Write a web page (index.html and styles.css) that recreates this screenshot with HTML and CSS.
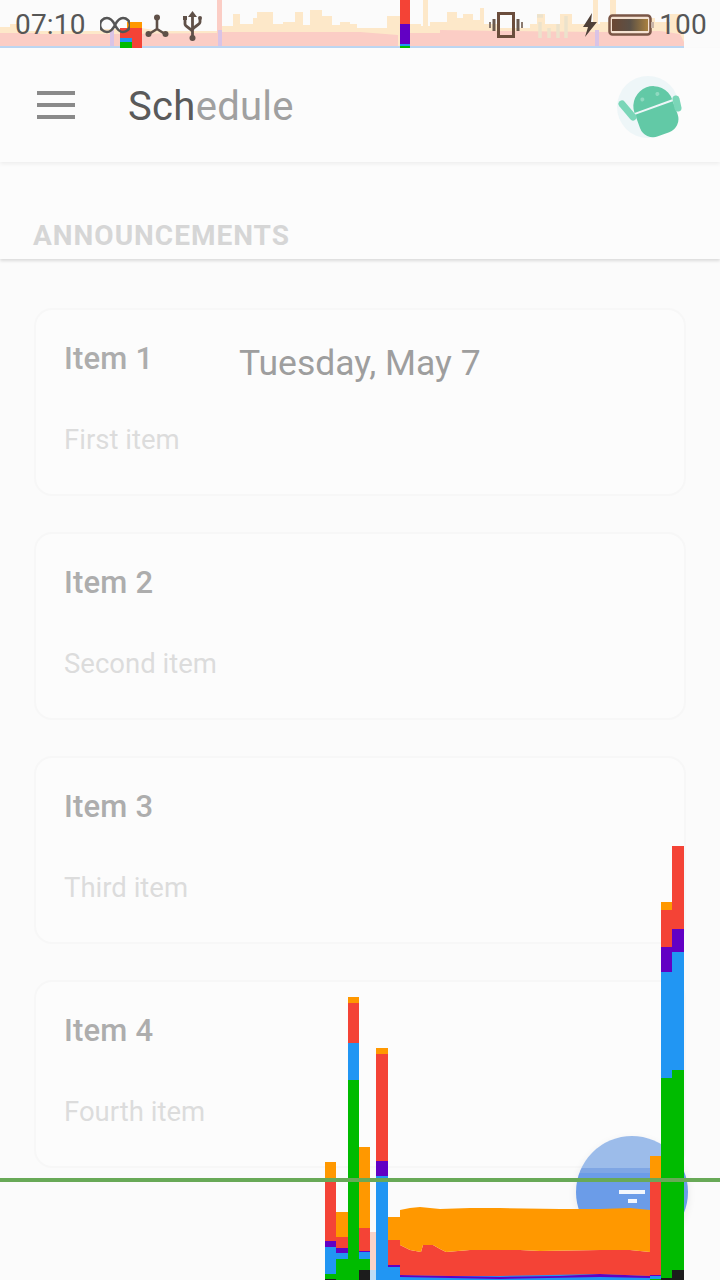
FILE: index.html
```html
<!DOCTYPE html>
<html lang="en">
<head>
<meta charset="utf-8">
<title>Schedule</title>
<link rel="stylesheet" href="styles.css">
</head>
<body>
<div class="screen">
  <svg class="strip" width="720" height="50" viewBox="0 0 720 50">
    <polygon class="s-orange" points="0,48 0,27 10,27 10,24 20,24 20,31 100,31 100,29 135,29 135,27 160,31 218,31 222,31 222,26 233,26 233,14 240,14 240,24 253,24 253,18 257,18 257,12 273,12 273,24 283,24 283,22 295,22 295,12 303,12 303,25 310,25 310,10 322,10 322,16 332,16 332,25 340,25 340,22 350,22 350,24 357,24 357,28 387,28 387,16 400,16 400,48"/>
    <polygon class="s-orange" points="410,48 410,24 421,24 421,26 430,26 430,22 447,22 447,12 457,12 457,18 463,18 463,14 473,14 473,20 480,20 480,8 484,8 484,24 500,24 500,28 530,28 530,24 537,24 537,14 545,14 545,24 560,24 560,14 572,14 572,24 600,24 600,22 640,22 640,18 655,18 655,22 670,22 670,14 680,14 680,30 684,30 684,48"/>
    <rect class="s-orange" x="423" y="0" width="5" height="48"/>
    <rect class="s-orange" x="593" y="0" width="5" height="48"/>
    <rect class="s-orange" x="610" y="0" width="6" height="48"/>
    <rect class="s-orange" x="219" y="0" width="3" height="48"/>
    <polygon class="s-pink" points="0,46 0,33 40,33 40,34 110,34 218,33 218,32 300,32 340,32 360,32 398,35 398,46"/>
    <polygon class="s-pink" points="410,46 410,33 440,33 440,30 500,31 600,32 660,31 680,34 684,42 684,46"/>
    <rect class="s-pink" x="217" y="0" width="5" height="46"/>
    <rect class="s-lilac" x="218" y="30" width="4" height="16"/>
    <rect class="s-lilac" x="110" y="30" width="4" height="16"/>
    <rect class="s-lilac" x="595" y="30" width="4" height="16"/>
    <rect class="s-blue" x="0" y="46" width="684" height="3"/>
    <rect class="o" x="127" y="22" width="15" height="6"/>
    <rect class="r" x="120" y="28" width="22" height="21"/>
    <rect class="b" x="120" y="38" width="12" height="4"/>
    <rect class="g" x="120" y="42" width="12" height="7"/>
    <rect class="r" x="400" y="0" width="10" height="24"/>
    <rect class="p" x="400" y="24" width="10" height="20"/>
    <rect class="b" x="400" y="44" width="10" height="2"/>
    <rect class="g" x="400" y="46" width="10" height="3"/>
  </svg>

  <header class="status">
    <div class="status-left">
      <span class="status-text">07:10</span>
      <svg class="ic-loop" width="30" height="18" viewBox="0 0 30 18"><path d="M15 9C12 3 9 2 7 2a7 7 0 0 0 0 14c2 0 5-1 8-7s6-7 8-7a7 7 0 0 1 0 14c-2 0-5-1-8-7" fill="none" stroke="#555" stroke-width="2.600"/></svg>
      <svg class="ic-hub" width="24" height="24" viewBox="0 0 24 24"><path d="M12 4v11M12 15L4 20M12 15l8 5" stroke="#5f5048" stroke-width="2.600" fill="none"/><circle cx="12" cy="3.500" r="3" fill="#5f5048"/><circle cx="3.500" cy="20" r="3" fill="#5f5048"/><circle cx="20.500" cy="20" r="3" fill="#5f5048"/></svg>
      <svg class="ic-usb" width="19" height="30" viewBox="0 0 19 30"><path d="M9.500 5v23M2 8v5c0 3 7.500 5 7.500 8M17 8v3c0 3-7.500 5-7.500 8" stroke="#5f5048" stroke-width="2.800" fill="none"/><path d="M9.500 0l4.500 6H5z" fill="#5f5048"/><rect x="0" y="5" width="4" height="4" fill="#5f5048"/><circle cx="17" cy="7" r="2" fill="#5f5048"/><circle cx="9.500" cy="27" r="3" fill="#5f5048"/></svg>
    </div>
    <div class="status-right">
      <svg class="ic-vibrate" width="34" height="26" viewBox="0 0 34 26"><rect x="9.500" y="1.500" width="15" height="23" fill="none" stroke="#6b4d3c" stroke-width="3"/><path d="M5 7v12M29 7v12" stroke="#6b5a50" stroke-width="3"/><path d="M1 10v6M33 10v6" stroke="#8b7a70" stroke-width="2"/></svg>
      <svg class="ic-signal" width="36" height="30" viewBox="0 0 36 30"><path d="M4 6h6M7 12v16M16 18v10M25 14v14M33 6v22" stroke="#ece2cc" stroke-width="3.500" fill="none"/></svg>
      <svg class="ic-bolt" width="14" height="24" viewBox="0 0 14 24"><path d="M9 0L0 14h5l-3 10L14 9H8z" fill="#4f4038"/></svg>
      <svg class="ic-battery" width="46" height="22" viewBox="0 0 46 22"><defs><linearGradient id="batt" x1="0" x2="1" y1="0" y2="0"><stop offset="0" stop-color="#6b4733"/><stop offset="0.5" stop-color="#5b5046"/><stop offset="1" stop-color="#a8803f"/></linearGradient></defs><rect x="1.500" y="1.500" width="41" height="19" rx="3" fill="#f5e2d2" stroke="#7a5646" stroke-width="2.500"/><rect x="4" y="5" width="36" height="12" fill="url(#batt)"/><rect x="43" y="8" width="3" height="6" fill="#c9b5a8"/></svg>
      <span class="status-text">100</span>
    </div>
  </header>

  <div class="appbar">
    <div class="menu"><span class="menu-line"></span><span class="menu-line"></span><span class="menu-line"></span></div>
    <h1 class="title"><span class="title-dark">Sch</span><span class="title-light">edule</span></h1>
    <svg class="avatar" width="70" height="70" viewBox="0 0 70 70">
      <circle cx="33" cy="39" r="31" fill="#eef6f8"/>
      <g transform="rotate(-20 39 40)" fill="#62c9a6">
        <path d="M19 38a20 20 0 0 1 40 0z"/>
        <path d="M19 40h40v14a14 14 0 0 1-14 14H33a14 14 0 0 1-14-14z"/>
        <circle cx="31" cy="28" r="2" fill="#8fd9c0"/>
        <circle cx="47" cy="28" r="2" fill="#8fd9c0"/>
      </g>
      <line x1="61" y1="31" x2="63" y2="40" stroke="#7ad6b8" stroke-width="7" stroke-linecap="round"/>
      <line x1="7" y1="36" x2="18" y2="49" stroke="#7ad6b8" stroke-width="7" stroke-linecap="round"/>
    </svg>
  </div>

  <div class="section-head"><h2 class="section-title">ANNOUNCEMENTS</h2></div>

  <main class="list">
    <article class="card"><h3 class="card-title">Item 1</h3><p class="card-sub">First item</p></article>
    <article class="card"><h3 class="card-title">Item 2</h3><p class="card-sub">Second item</p></article>
    <article class="card"><h3 class="card-title">Item 3</h3><p class="card-sub">Third item</p></article>
    <article class="card"><h3 class="card-title">Item 4</h3><p class="card-sub">Fourth item</p></article>
  </main>

  <div class="date">Tuesday, May 7</div>

  <button class="fab" type="button" aria-label="Filter"><span class="fab-line fab-line-long"></span><span class="fab-line fab-line-short"></span></button>

  <svg class="bars" width="720" height="1280" viewBox="0 0 720 1280">
    <rect class="o" x="325" y="1162" width="11" height="19"/><rect class="r" x="325" y="1181" width="11" height="60"/><rect class="p" x="325" y="1241" width="11" height="6"/><rect class="b" x="325" y="1247" width="11" height="27"/><rect class="g" x="325" y="1274" width="11" height="5"/><rect class="k" x="325" y="1279" width="11" height="1"/>
    <rect class="o" x="336" y="1212" width="12" height="25"/><rect class="r" x="336" y="1237" width="12" height="11"/><rect class="p" x="336" y="1248" width="12" height="5"/><rect class="b" x="336" y="1253" width="12" height="6"/><rect class="g" x="336" y="1259" width="12" height="21"/>
    <rect class="o" x="348" y="997" width="11" height="6"/><rect class="r" x="348" y="1003" width="11" height="40"/><rect class="b" x="348" y="1043" width="11" height="37"/><rect class="g" x="348" y="1080" width="11" height="200"/>
    <rect class="o" x="359" y="1147" width="11" height="81"/><rect class="r" x="359" y="1228" width="11" height="23"/><rect class="p" x="359" y="1251" width="11" height="1"/><rect class="b" x="359" y="1252" width="11" height="7"/><rect class="g" x="359" y="1259" width="11" height="11"/><rect class="k" x="359" y="1270" width="11" height="10"/>
    <rect class="pale" x="370" y="1232" width="6" height="38"/><rect class="pale-b" x="370" y="1270" width="6" height="10"/>
    <rect class="o" x="376" y="1048" width="12" height="6"/><rect class="r" x="376" y="1054" width="12" height="107"/><rect class="p" x="376" y="1161" width="12" height="15"/><rect class="b" x="376" y="1176" width="12" height="104"/>
    <rect class="o" x="388" y="1217" width="12" height="23"/><rect class="r" x="388" y="1240" width="12" height="25"/><rect class="p" x="388" y="1265" width="12" height="2"/><rect class="b" x="388" y="1267" width="12" height="13"/>
    <rect class="b" x="400" y="1274" width="250" height="6"/>
    <polygon class="p" points="400,1275 450,1276 500,1277 560,1276 600,1274 650,1276 650,1278 600,1277 500,1279 400,1277"/>
    <polygon class="r" points="400,1245 410,1250 421,1252 423,1245 433,1245 440,1249 446,1252 470,1250 520,1250 540,1251 600,1250 630,1250 650,1252 650,1276 600,1274 500,1276 450,1276 400,1275"/>
    <polygon class="o" points="400,1210 410,1208 420,1207 440,1209 470,1208 500,1208 560,1209 600,1209 630,1208 650,1210 650,1252 630,1250 600,1250 540,1251 520,1250 470,1250 446,1252 440,1249 433,1245 423,1245 421,1252 410,1250 400,1245"/>
    <rect class="o" x="650" y="1156" width="11" height="25"/><rect class="r" x="650" y="1181" width="11" height="94"/><rect class="p" x="650" y="1275" width="11" height="1"/><rect class="b" x="650" y="1276" width="11" height="3"/><rect class="g" x="650" y="1279" width="11" height="1"/>
    <rect class="o" x="661" y="902" width="11" height="8"/><rect class="r" x="661" y="910" width="11" height="37"/><rect class="p" x="661" y="947" width="11" height="25"/><rect class="b" x="661" y="972" width="11" height="106"/><rect class="g" x="661" y="1078" width="11" height="200"/><rect class="k" x="661" y="1278" width="11" height="2"/>
    <rect class="r" x="672" y="846" width="12" height="83"/><rect class="p" x="672" y="929" width="12" height="23"/><rect class="b" x="672" y="952" width="12" height="118"/><rect class="g" x="672" y="1070" width="12" height="200"/><rect class="k" x="672" y="1270" width="12" height="10"/>
  </svg>

  <div class="baseline"></div>
</div>
</body>
</html>
```

FILE: styles.css
```css
html, body {
  margin: 0;
  padding: 0;
}

body {
  background: #fbfbfb;
  font-family: Roboto, "Liberation Sans", sans-serif;
}

.screen {
  position: relative;
  width: 720px;
  height: 1280px;
  overflow: hidden;
  background: #fbfbfb;
}

.strip {
  position: absolute;
  left: 0;
  top: 0;
}

.s-orange { fill: #fde8c9; }
.s-pink { fill: #fbcdc5; }
.s-lilac { fill: #d9c3e6; }
.s-blue { fill: #bcd6f2; }

.o { fill: #ff9800; }
.r { fill: #f44336; }
.p { fill: #6200c4; }
.b { fill: #2196f3; }
.g { fill: #00bb00; }
.k { fill: #1c1c1c; }
.pale { fill: #f9d3c8; }
.pale-b { fill: #bcdcf5; }

.status {
  position: relative;
  display: flex;
  justify-content: space-between;
  align-items: center;
  height: 48px;
  padding: 2px 13px 0 15px;
  box-sizing: border-box;
}

.status-left,
.status-right {
  display: flex;
  align-items: center;
}

.status-text {
  font-size: 28px;
  line-height: 46px;
  color: #565656;
  letter-spacing: 0.2px;
}

.ic-loop { margin-left: 14px; }
.ic-hub { margin-left: 15px; margin-top: 2px; }
.ic-usb { margin-left: 14px; margin-top: 2px; }
.ic-vibrate { margin-right: 0; }
.ic-signal { margin-left: 10px; }
.ic-bolt { margin-left: 14px; }
.ic-battery { margin-left: 11px; margin-right: 5px; }

.appbar {
  display: flex;
  align-items: center;
  height: 114px;
  padding: 0 36px 0 37px;
  box-sizing: border-box;
  background: #fcfcfc;
  box-shadow: 0 2px 4px rgba(0, 0, 0, 0.06);
  position: relative;
  z-index: 1;
}

.menu {
  display: flex;
  flex-direction: column;
  gap: 8px;
  width: 38px;
}

.menu-line {
  display: block;
  height: 4px;
  background: #8a8a8a;
}

.title {
  flex: 1;
  margin: 4px 0 0 53px;
  font-size: 40px;
  font-weight: 400;
  line-height: 48px;
  letter-spacing: 0.3px;
}

.title-dark { color: #5a5a5a; }
.title-light { color: #a0a0a0; }

.avatar {
  margin-right: -1px;
  margin-bottom: 4px;
}

.section-head {
  height: 97px;
  box-sizing: border-box;
  padding: 58px 0 0 33px;
  background: #fcfcfc;
  box-shadow: 0 2px 3px rgba(0, 0, 0, 0.13);
  position: relative;
}

.section-title {
  margin: 0;
  font-size: 28px;
  font-weight: 700;
  line-height: 32px;
  letter-spacing: 1px;
  color: #d6d6d6;
}

.list {
  display: flex;
  flex-direction: column;
  gap: 36px;
  padding: 49px 34px 0;
}

.card {
  height: 188px;
  box-sizing: border-box;
  padding: 31px 28px 0;
  background: #fcfcfc;
  border: 2px solid #f7f7f7;
  border-radius: 18px;
  flex: none;
}

.card-title {
  margin: 0;
  font-size: 31px;
  font-weight: 500;
  line-height: 36px;
  letter-spacing: 0.2px;
  color: #adadad;
}

.card-sub {
  margin: 46px 0 0;
  font-size: 27.500px;
  font-weight: 400;
  line-height: 34px;
  color: #dcdcdc;
}

.date {
  position: absolute;
  left: 239px;
  top: 341px;
  font-size: 35.500px;
  line-height: 44px;
  color: #9e9e9e;
}

.fab {
  position: absolute;
  left: 576px;
  top: 1136px;
  width: 112px;
  height: 112px;
  border: 0;
  padding: 52px 0 0 0;
  border-radius: 50%;
  background: linear-gradient(#9cbcea 0, #9cbcea 29%, #7fa6e4 29%, #7fa6e4 33%, #6b9ce8 33%);
  box-shadow: 0 3px 8px rgba(0, 0, 0, 0.08);
  display: flex;
  flex-direction: column;
  align-items: center;
  gap: 5px;
}

.fab-line {
  display: block;
  height: 4px;
  background: #f3f7fd;
}

.fab-line-long { width: 26px; margin-top: 2px; }
.fab-line-short { width: 9px; }

.bars {
  position: absolute;
  left: 0;
  top: 0;
  z-index: 2;
}

.baseline {
  position: absolute;
  left: 0;
  right: 0;
  top: 1178px;
  height: 4px;
  background: #68a957;
  z-index: 3;
}
```
